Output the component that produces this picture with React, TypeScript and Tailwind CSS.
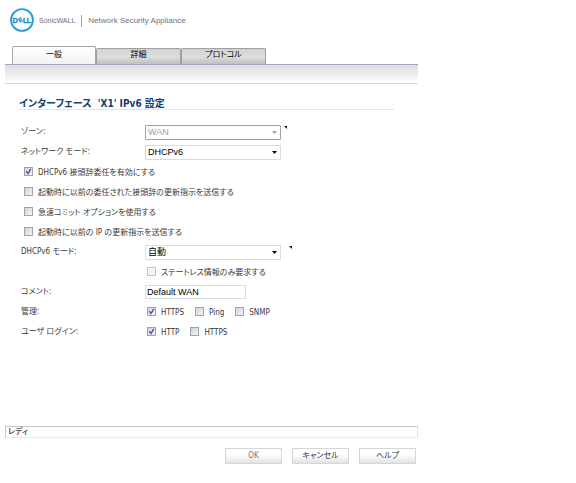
import React from "react";

const tabs = ["一般", "詳細", "プロトコル"];

function Logo() {
  return (
    <header className="flex items-center h-6 ml-1">
      <svg viewBox="0 0 26 24" className="w-[26px] h-6" role="img" aria-label="Dell">
        <circle cx="13" cy="12" r="10.9" fill="#fff" stroke="#2b9bd3" strokeWidth="1.9" />
        <g
          fontFamily="Liberation Sans, sans-serif"
          fontWeight="bold"
          fontSize="7"
          fill="#1488c8"
          stroke="#1488c8"
          strokeWidth="0.3"
          textAnchor="middle"
        >
          <text x="6.4" y="14.5">D</text>
          <text x="11.5" y="14.1" fontSize="6" transform="rotate(-30 11.5 12)">E</text>
          <text x="16.2" y="14.5">L</text>
          <text x="20" y="14.5">L</text>
        </g>
      </svg>
      <div className="flex items-center pt-px font-['Liberation_Sans',sans-serif]">
        <span className="ml-1 text-[7px] text-gray-500">SonicWALL</span>
        <span className="mx-[6px] w-px h-3 bg-gray-400" />
        <span className="text-[8px] text-gray-500">Network Security Appliance</span>
      </div>
    </header>
  );
}

function Row({ label, htmlFor, children }: { label: string; htmlFor?: string; children: React.ReactNode }) {
  return (
    <div className="flex items-center h-5">
      <label htmlFor={htmlFor} className="w-[124px] shrink-0">
        {label}
      </label>
      {children}
    </div>
  );
}

function CheckGroup({ label, children }: { label: string; children: React.ReactNode }) {
  return (
    <div role="group" aria-label={label} className="flex items-center h-5">
      <span className="w-[124px] shrink-0">{label}</span>
      <div className="flex gap-[11px] pl-[2px]">{children}</div>
    </div>
  );
}

function Check({ label, checked, disabled }: { label: string; checked?: boolean; disabled?: boolean }) {
  return (
    <label className="flex items-center gap-[5px] pt-px whitespace-nowrap">
      <span className="grid shrink-0 -mt-[2px]">
        <input
          type="checkbox"
          defaultChecked={checked}
          disabled={disabled}
          className="peer appearance-none col-start-1 row-start-1 w-[9px] h-[9px] border border-[#a0a3a8] bg-linear-to-br from-[#cfd3d8] to-[#f4f5f6] disabled:border-[#c4c4c4] disabled:from-[#f4f4f4]"
        />
        <svg
          viewBox="0 0 9 9"
          className="col-start-1 row-start-1 w-[9px] h-[9px] pointer-events-none invisible peer-checked:visible"
        >
          <path d="M2.2 4.2L4 6.6L6.8 1.8" fill="none" stroke="#4356a5" strokeWidth="1.4" />
        </svg>
      </span>
      {label}
    </label>
  );
}

function Select({ id, value, disabled }: { id: string; value: string; disabled?: boolean }) {
  return (
    <span className="grid items-center w-[136px]">
      <select
        id={id}
        disabled={disabled}
        className="appearance-none col-start-1 row-start-1 w-full h-[15px] pl-[2px] border border-[#d5dde4] bg-white text-[9px] leading-[13px] text-black disabled:border-[#a3a3a3] disabled:rounded-[1px] disabled:text-[#a0a0a0] disabled:opacity-100 font-['Liberation_Sans','Noto_Sans_CJK_JP',sans-serif] peer"
      >
        <option>{value}</option>
      </select>
      <svg
        viewBox="0 0 5 3"
        className="col-start-1 row-start-1 justify-self-end mr-1 w-[5px] h-[3px] pointer-events-none fill-black peer-disabled:fill-[#a0a0a0]"
      >
        <path d="M0 0H5L2.5 3Z" />
      </svg>
    </span>
  );
}

function Corner() {
  return (
    <svg viewBox="0 0 3 3" className="w-[3px] h-[3px] -mt-[6px]">
      <path d="M0 0H3V3Z" fill="#111" />
    </svg>
  );
}

function Button({ children, className = "text-[#34344c]" }: { children: string; className?: string }) {
  return (
    <button
      type="button"
      className={`w-[57px] h-4 border border-[#d6d6d6] bg-linear-to-b from-white from-40% to-[#e2e2e2] text-[8px] leading-[14px] ${className}`}
    >
      {children}
    </button>
  );
}

function App() {
  return (
    <div className="min-h-screen bg-white pt-2 pl-[5px] pr-1 text-[8px] leading-[12px] text-[#3a3a3a] font-['DejaVu_Sans_Condensed','DejaVu_Sans','Noto_Sans_CJK_JP',sans-serif] [font-feature-settings:'palt']">
      <div className="w-full max-w-[413px]">
        <Logo />

        <nav className="flex items-end mt-[14px] pl-[7px] border-b border-[#a5a3bd]">
          {tabs.map((tab, i) => (
            <button
              key={tab}
              type="button"
              className={
                i === 0
                  ? "w-[84px] h-[18px] pb-[2px] rounded-t-[2px] border border-b-0 border-[#a6a6a6] bg-linear-to-b from-white to-[#f3f3f3] text-black"
                  : "w-[85px] h-4 pb-[3px] rounded-t-[2px] border border-b-0 border-[#a0a0a0] bg-linear-to-b from-[#d2d2d2] via-[#dedede] to-[#c0c0c0] text-black"
              }
            >
              {tab}
            </button>
          ))}
        </nav>
        <div className="h-[19px] border-b border-[#d8d8d8] bg-linear-to-b from-[#dcdcde] to-white" />

        <main className="pl-4 pr-6">
          <h1 className="mt-[15px] -ml-[2px] border-b border-[#e6e6e6] text-[10px] leading-[10px] font-bold text-[#12406b]">
            インターフェース &nbsp;'X1' IPv6 設定
          </h1>

          <form className="mt-3">
            <Row label="ゾーン:" htmlFor="zone">
              <Select id="zone" value="WAN" disabled />
              <span className="ml-[3px] flex">
                <Corner />
              </span>
            </Row>
            <Row label="ネットワーク モード:" htmlFor="mode">
              <Select id="mode" value="DHCPv6" />
            </Row>
            <div className="pl-[3px]">
              <div className="flex items-center h-5">
                <Check label="DHCPv6 接頭辞委任を有効にする" checked />
              </div>
              <div className="flex items-center h-5">
                <Check label="起動時に以前の委任された接頭辞の更新指示を送信する" />
              </div>
              <div className="flex items-center h-5">
                <Check label="急速コミット オプションを使用する" />
              </div>
              <div className="flex items-center h-5">
                <Check label="起動時に以前の IP の更新指示を送信する" />
              </div>
            </div>
            <Row label="DHCPv6 モード:" htmlFor="dhcp">
              <Select id="dhcp" value="自動" />
              <span className="ml-2 flex">
                <Corner />
              </span>
            </Row>
            <div className="flex items-center h-5 pl-[126px]">
              <Check label="ステートレス情報のみ要求する" disabled />
            </div>
            <Row label="コメント:" htmlFor="comment">
              <input
                id="comment"
                type="text"
                defaultValue="Default WAN"
                className="w-[101px] h-[14px] pl-[1px] border border-[#d5dde4] text-[9px] text-black font-['Liberation_Sans',sans-serif]"
              />
            </Row>
            <CheckGroup label="管理:">
              <Check label="HTTPS" checked />
              <Check label="Ping" />
              <Check label="SNMP" />
            </CheckGroup>
            <CheckGroup label="ユーザ ログイン:">
              <Check label="HTTP" checked />
              <Check label="HTTPS" />
            </CheckGroup>
          </form>
        </main>

        <footer className="mt-[84px]">
          <p className="h-3 pl-[2px] border border-t-[#c8c8c8] border-l-[#c8c8c8] border-r-[#e6e6e6] border-b-[#ececec] leading-[10px] text-black">
            レディ
          </p>
          <div className="flex justify-end gap-[10px] mt-[10px] pr-[2px]">
            <Button className="text-[#9c5f5f]">OK</Button>
            <Button>キャンセル</Button>
            <Button>ヘルプ</Button>
          </div>
        </footer>
      </div>
    </div>
  );
}

export default App;
